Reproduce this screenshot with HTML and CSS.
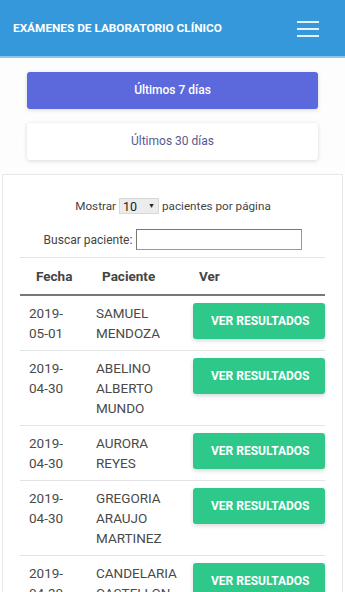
FILE: index.html
```html
<!DOCTYPE html>
<html lang="es">

<head>
    <meta charset="UTF-8">
    <meta name="viewport" content="width=device-width, initial-scale=1.0">
    <title>Exámenes de laboratorio clínico</title>
    <link rel="stylesheet" href="styles.css">
</head>

<body>
    <!-- barra superior -->
    <div class="topbar">
        <span class="brand">Exámenes de laboratorio clínico</span>
        <span class="burger">
            <svg width="22" height="17" viewBox="0 0 22 17">
                <rect x="0" y="0" width="22" height="2" fill="#e3f1fc" />
                <rect x="0" y="7" width="22" height="2" fill="#e3f1fc" />
                <rect x="0" y="14" width="22" height="2" fill="#e3f1fc" />
            </svg>
        </span>
    </div>

    <!-- filtros por fecha -->
    <div class="ranges">
        <div class="range active">Últimos 7 días</div>
        <div class="range">Últimos 30 días</div>
    </div>

    <!-- listado -->
    <div class="card">
        <div class="length">
            Mostrar
            <span class="select">10 <span class="caret">▼</span></span>
            pacientes por página
        </div>
        <div class="search">
            Buscar paciente:
            <span class="input"></span>
        </div>

        <table class="patients">
            <thead>
                <tr>
                    <th class="c-date">Fecha</th>
                    <th class="c-name">Paciente</th>
                    <th class="c-ver">Ver</th>
                </tr>
            </thead>
            <tbody>
                <tr>
                    <td>2019-<br>05-01</td>
                    <td>SAMUEL MENDOZA</td>
                    <td class="c-btn"><span class="btn">Ver resultados</span></td>
                </tr>
                <tr>
                    <td>2019-<br>04-30</td>
                    <td>ABELINO ALBERTO MUNDO</td>
                    <td class="c-btn"><span class="btn">Ver resultados</span></td>
                </tr>
                <tr>
                    <td>2019-<br>04-30</td>
                    <td>AURORA REYES</td>
                    <td class="c-btn"><span class="btn">Ver resultados</span></td>
                </tr>
                <tr>
                    <td>2019-<br>04-30</td>
                    <td>GREGORIA ARAUJO MARTINEZ</td>
                    <td class="c-btn"><span class="btn">Ver resultados</span></td>
                </tr>
                <tr>
                    <td>2019-<br>04-30</td>
                    <td>CANDELARIA CASTELLON</td>
                    <td class="c-btn"><span class="btn">Ver resultados</span></td>
                </tr>
            </tbody>
        </table>
    </div>
</body>

</html>
```

FILE: styles.css
```css
body {
    margin: 0;
    font-family: Roboto, "Noto Sans", sans-serif;
    color: #444;
    background-color: #fff;
}

.topbar {
    display: flex;
    align-items: center;
    justify-content: space-between;
    height: 56px;
    padding: 0 26px 0 13px;
    background-color: #3498db;
    border-bottom: 2px solid #8fc5ec;
}

.brand {
    color: #fff;
    font-size: 11.8px;
    font-weight: bold;
    text-transform: uppercase;
}

.burger {
    display: flex;
    padding-top: 2px;
}

.ranges {
    display: flex;
    flex-direction: column;
    gap: 14px;
    padding: 14px 27px 14px 27px;
    background-color: #fdfdfd;
}

.range {
    height: 37px;
    line-height: 37px;
    text-align: center;
    font-size: 12px;
    color: #555a92;
    background-color: #fff;
    border-radius: 3px;
    box-shadow: 0 1px 4px rgba(0, 0, 0, 0.15);
}

.range.active {
    color: #fff;
    font-weight: 500;
    background-color: #5b69dc;
}

.card {
    margin: 0 2px;
    padding: 22px 16px 0 17px;
    border: 1px solid #e8e8e8;
    border-bottom: none;
    font-size: 11.7px;
}

.length {
    display: flex;
    align-items: center;
    justify-content: center;
    gap: 3px;
    height: 18px;
}

.select {
    display: inline-flex;
    align-items: center;
    justify-content: space-between;
    box-sizing: border-box;
    width: 40px;
    height: 16px;
    padding: 0 3px;
    font-size: 12.5px;
    background-color: #ececec;
    border: 1px solid #d8d8d8;
    color: #222;
}

.caret {
    font-size: 7px;
}

.search {
    display: flex;
    align-items: center;
    justify-content: center;
    gap: 4px;
    margin-top: 14px;
    font-size: 12px;
}

.input {
    display: inline-block;
    box-sizing: border-box;
    width: 166px;
    height: 21px;
    border: 1px solid #999;
    border-left-color: #777;
    border-top-color: #777;
    background-color: #fff;
}

.patients {
    width: 305px;
    margin-top: 7px;
    border-collapse: collapse;
    table-layout: fixed;
    font-size: 13.5px;
}

.patients th {
    padding: 8px 0 8px 16px;
    line-height: 20px;
    text-align: left;
    font-size: 13.5px;
    font-weight: bold;
    color: #444;
    border-top: 1px solid #e4e4e4;
    border-bottom: 2px solid #777;
}

.c-date {
    width: 50px;
}

.c-name {
    width: 81px;
}

.patients td {
    padding: 7px 4px 7px 10px;
    line-height: 20px;
    vertical-align: top;
    color: #4a4a4a;
    border-bottom: 1px solid #e4e4e4;
}

.patients td:first-child {
    padding-left: 9px;
}

.patients td.c-btn {
    padding-right: 0;
}

.btn {
    display: block;
    height: 36px;
    line-height: 36px;
    padding-left: 18px;
    color: #fff;
    font-size: 12px;
    font-weight: bold;
    text-transform: uppercase;
    background-color: #2ec88a;
    border-radius: 3px;
    box-shadow: 0 2px 4px rgba(0, 0, 0, 0.15);
}
```
